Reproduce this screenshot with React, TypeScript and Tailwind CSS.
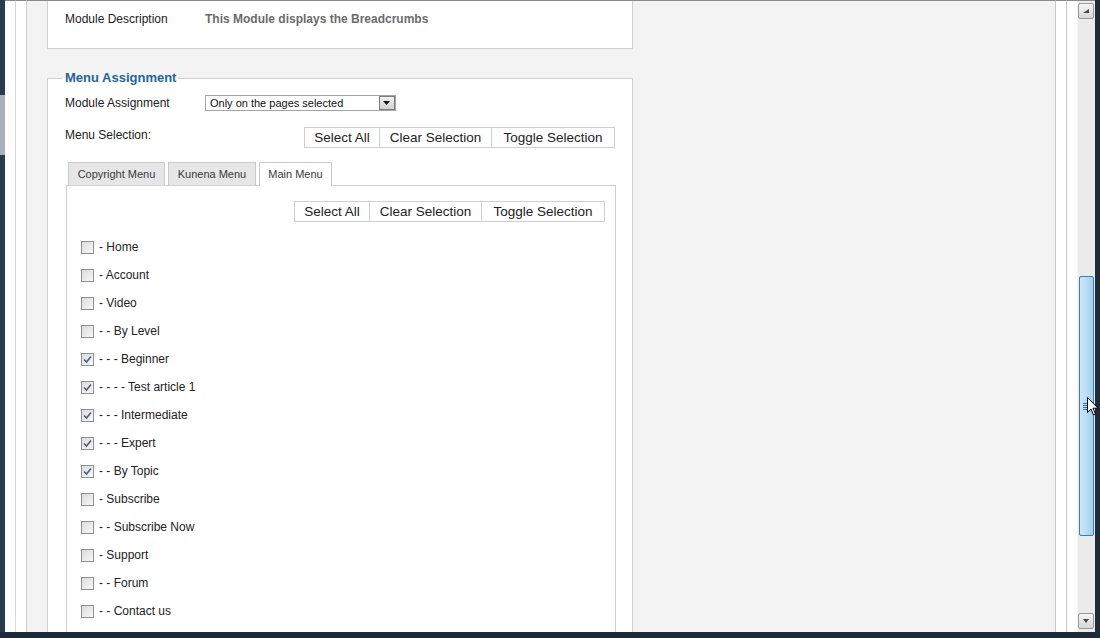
import React from 'react';

const items: { label: string; checked: boolean }[] = [
    { label: '- Home', checked: false },
    { label: '- Account', checked: false },
    { label: '- Video', checked: false },
    { label: '- - By Level', checked: false },
    { label: '- - - Beginner', checked: true },
    { label: '- - - - Test article 1', checked: true },
    { label: '- - - Intermediate', checked: true },
    { label: '- - - Expert', checked: true },
    { label: '- - By Topic', checked: true },
    { label: '- Subscribe', checked: false },
    { label: '- - Subscribe Now', checked: false },
    { label: '- Support', checked: false },
    { label: '- - Forum', checked: false },
    { label: '- - Contact us', checked: false },
];

function Checkbox({ checked }: { checked: boolean }) {
    return (
        <span className="w-[13px] h-[13px] border border-[#8f8f8f] bg-gradient-to-br from-[#dcdcdc] to-[#f8f8f8] flex items-center justify-center shrink-0">
            {checked && (
                <svg width="9" height="9" viewBox="0 0 9 9">
                    <path d="M1 4.5 L3.5 7 L8 1.5" fill="none" stroke="#4a5f7a" strokeWidth="1.6" />
                </svg>
            )}
        </span>
    );
}

function ButtonGroup() {
    return (
        <div className="flex text-[13.5px] text-[#222] leading-none">
            <button className="w-[76px] h-[21px] border border-[#cfcfcf] bg-white">Select All</button>
            <button className="w-[112px] h-[21px] border border-l-0 border-[#cfcfcf] bg-white">Clear Selection</button>
            <button className="w-[123px] h-[21px] border border-l-0 border-[#cfcfcf] bg-white">Toggle Selection</button>
        </div>
    );
}

function ScrollArrow({ up }: { up: boolean }) {
    return (
        <div className="w-[16px] h-[16px] border border-[#9a9a9a] rounded-[2px] bg-gradient-to-b from-[#f6f6f6] to-[#d6d6d6] flex items-center justify-center">
            <svg width="8" height="6" viewBox="0 0 8 6">
                {up ? <path d="M7 1 L7 5 L1 5 Z" fill="#4a4a4a" /> : <path d="M1 1 L7 1 L4 5 Z" fill="#4a4a4a" />}
            </svg>
        </div>
    );
}

export default function App() {
    return (
        <div className="w-[1100px] h-[638px] flex flex-col overflow-hidden bg-[#1f2b3a] font-['Liberation_Sans',Arial,sans-serif]">
            <div className="flex h-[632px]">
                {/* left screen edge */}
                <div className="w-[5px] flex flex-col bg-[#2b3a4d]">
                    <div className="h-[95px]" />
                    <div className="h-[60px] bg-[#aab0b8]" />
                </div>
                <div className="w-[11px] bg-white border-t border-[#8a8a8a] border-r border-r-[#d9d9d9]" />
                <div className="w-[11px] bg-white border-t border-[#8a8a8a] border-r border-r-[#cfcfcf]" />

                {/* page body */}
                <div className="w-[1030px] bg-[#f3f3f4] border-t border-[#8a8a8a] border-r border-r-[#c8c8c8] pl-[20px] overflow-hidden">
                    {/* module details fieldset (cut off at top) */}
                    <div className="w-[586px] h-[48px] bg-white border border-t-0 border-[#d0d0d0] pl-[17px] pt-[11px] flex text-[12px] leading-[14px]">
                        <span className="w-[140px] text-[#222]">Module Description</span>
                        <span className="font-bold text-[#6b6b6b]">This Module displays the Breadcrumbs</span>
                    </div>

                    {/* menu assignment */}
                    <fieldset className="mt-[21px] w-[586px] h-[600px] bg-white border border-[#d0d0d0] pl-[17px] pr-[16px]">
                        <legend className="px-[2px] -ml-[2px] text-[13px] leading-[16px] font-bold text-[#23659a]">Menu Assignment</legend>

                        <div className="mt-[9px] flex items-center h-[16px]">
                            <span className="w-[140px] text-[12px] text-[#222]">Module Assignment</span>
                            <div className="w-[191px] h-[16px] border border-[#a4a4a4] flex items-center">
                                <span className="flex-1 pl-[4px] text-[11px] leading-none text-[#111]">Only on the pages selected</span>
                                <span className="w-[16px] h-[14px] border border-[#7d7d7d] bg-gradient-to-b from-[#f2f2f2] to-[#d2d2d2] flex items-center justify-center">
                                    <svg width="7" height="4" viewBox="0 0 7 4">
                                        <path d="M0 0 L7 0 L3.5 4 Z" fill="#111" />
                                    </svg>
                                </span>
                            </div>
                        </div>

                        <div className="mt-[16px] flex items-start justify-between pr-[1px]">
                            <span className="pt-px text-[12px] leading-[14px] text-[#222]">Menu Selection:</span>
                            <ButtonGroup />
                        </div>

                        {/* tabs */}
                        <div className="mt-[14px] ml-[1px] pl-[2px] flex items-end gap-[3px] text-[11px] text-[#3a3a3a]">
                            <div className="w-[97px] h-[23px] bg-[#e6e6e6] border border-b-0 border-[#cacaca] flex items-center justify-center">Copyright Menu</div>
                            <div className="w-[88px] h-[23px] bg-[#e6e6e6] border border-b-0 border-[#cacaca] flex items-center justify-center">Kunena Menu</div>
                            <div className="relative z-10 -mb-px w-[73px] h-[24px] bg-white border border-b-0 border-[#cacaca] flex items-center justify-center pb-px">Main Menu</div>
                        </div>
                        <div className="ml-[1px] border border-[#cfcfcf] h-[500px] pt-[15px] pl-[14px] pr-[10px]">
                            <div className="flex justify-end">
                                <ButtonGroup />
                            </div>
                            <div className="mt-[11px] flex flex-col">
                                {items.map((item) => (
                                    <div key={item.label} className="h-[28px] flex items-center gap-[5px]">
                                        <Checkbox checked={item.checked} />
                                        <span className="text-[12px] text-[#222]">{item.label}</span>
                                    </div>
                                ))}
                            </div>
                        </div>
                    </fieldset>
                </div>

                <div className="w-[11px] bg-white border-t border-[#8a8a8a] border-r border-r-[#c8c8c8]" />

                {/* scrollbar */}
                <div className="w-[28px] bg-white border-t border-[#8a8a8a] flex">
                    <div className="w-[10px]" />
                    <div className="w-[18px] bg-[#ebebeb] border-l border-[#f7f7f7] flex flex-col items-center pt-[2px] pb-[3px]">
                        <ScrollArrow up={true} />
                        <div className="flex-1 w-full flex flex-col items-center">
                            <div className="h-[257px]" />
                            <div className="relative w-[15px] h-[260px] rounded-[2px] border border-[#3d7db3] bg-gradient-to-r from-[#cde7f8] via-[#b7dcf4] to-[#a6d0ee] flex items-center justify-center">
                                <div className="flex flex-col gap-[1px]">
                                    <span className="w-[6px] h-px bg-[#3f6f96]" />
                                    <span className="w-[6px] h-px bg-[#3f6f96]" />
                                    <span className="w-[6px] h-px bg-[#3f6f96]" />
                                    <span className="w-[6px] h-px bg-[#3f6f96]" />
                                </div>
                                {/* mouse cursor */}
                                <svg className="absolute left-[7px] top-[120px]" width="12" height="19" viewBox="0 0 12 19">
                                    <path d="M0.5 0.5 L0.5 15.5 L4 12 L6.5 18 L8.5 17 L6 11.2 L11 11.2 Z" fill="#fff" stroke="#000" strokeWidth="1" />
                                </svg>
                            </div>
                        </div>
                        <ScrollArrow up={false} />
                    </div>
                </div>

                <div className="w-[5px] bg-[#1f2b3a]" />
            </div>
            <div className="h-[6px] bg-[#1e2a39]" />
        </div>
    );
}
